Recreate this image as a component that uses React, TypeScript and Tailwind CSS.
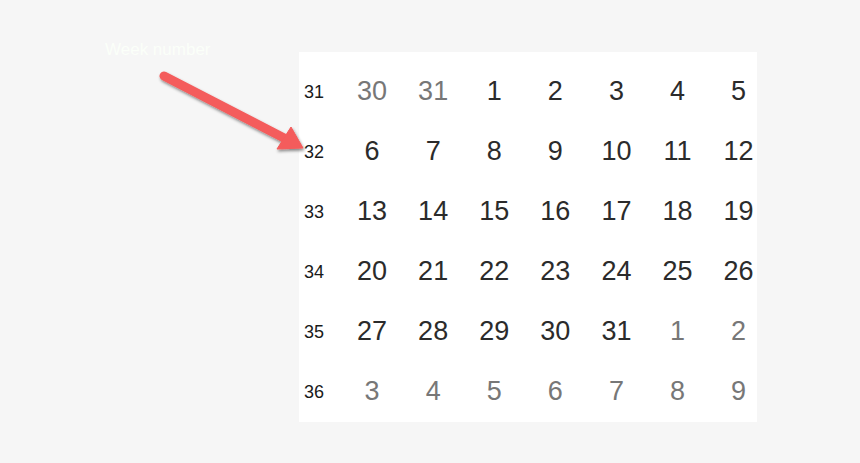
import React from "react";

type Cell = { n: number; muted?: boolean };

const weeks: { week: number; days: Cell[] }[] = [
  { week: 31, days: [{ n: 30, muted: true }, { n: 31, muted: true }, { n: 1 }, { n: 2 }, { n: 3 }, { n: 4 }, { n: 5 }] },
  { week: 32, days: [6, 7, 8, 9, 10, 11, 12].map((n) => ({ n })) },
  { week: 33, days: [13, 14, 15, 16, 17, 18, 19].map((n) => ({ n })) },
  { week: 34, days: [20, 21, 22, 23, 24, 25, 26].map((n) => ({ n })) },
  {
    week: 35,
    days: [{ n: 27 }, { n: 28 }, { n: 29 }, { n: 30 }, { n: 31 }, { n: 1, muted: true }, { n: 2, muted: true }],
  },
  { week: 36, days: [3, 4, 5, 6, 7, 8, 9].map((n) => ({ n, muted: true })) },
];

function Arrow() {
  return (
    <svg className="absolute left-0 top-0 pointer-events-none" width={860} height={463}>
      <defs>
        <filter id="shadow" x="-20%" y="-20%" width="140%" height="140%">
          <feDropShadow dx="1" dy="2" stdDeviation="1.5" floodColor="#000" floodOpacity="0.45" />
        </filter>
      </defs>
      <g filter="url(#shadow)" fill="#f45b5b" stroke="#f45b5b">
        <line x1={164} y1={76} x2={284} y2={138} strokeWidth={9} strokeLinecap="round" />
        <polygon points="291,127 277,149 303,148" strokeWidth={1} strokeLinejoin="round" />
      </g>
    </svg>
  );
}

export default function App() {
  return (
    <div className="relative w-[860px] h-[463px] bg-[#f6f6f6] font-['Liberation_Sans',Arial,sans-serif] overflow-hidden">
      <div className="pl-[299px] pt-[52px]">
        <div className="w-[458px] h-[370px] bg-white pt-[9px]">
          {weeks.map((row) => (
            <div key={row.week} className="flex h-[60px] items-center">
              <div className="w-[30px] shrink-0 pt-[3px] text-center text-[18px] text-[#1a1a1a] leading-[57px]">
                {row.week}
              </div>
              <div className="w-[12.5px] shrink-0" />
              {row.days.map((d, i) => (
                <div
                  key={i}
                  className={`w-[61.1px] shrink-0 text-center text-[27px] leading-[60px] ${
                    d.muted ? "text-[#777777]" : "text-[#2b2b2b]"
                  }`}
                >
                  {d.n}
                </div>
              ))}
            </div>
          ))}
        </div>
      </div>

      <div className="absolute left-[105px] top-[37px] text-[17px] text-[#fbfff9]">Week number</div>
      <Arrow />
    </div>
  );
}
